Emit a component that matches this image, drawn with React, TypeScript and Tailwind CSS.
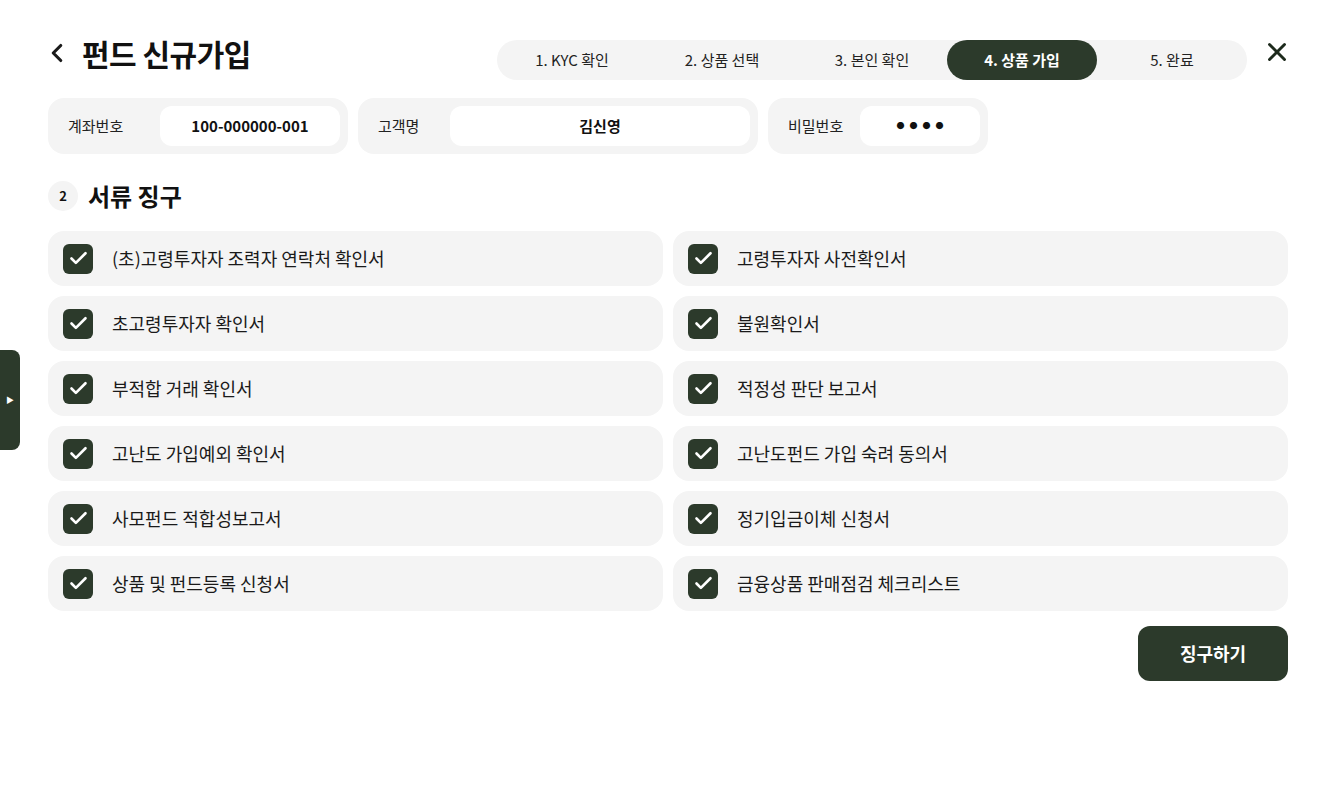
import { Check, ChevronLeft, X } from 'lucide-react'

const steps = ['1. KYC 확인', '2. 상품 선택', '3. 본인 확인', '4. 상품 가입', '5. 완료']

// 서류 목록 (좌/우 순서대로)
const docs = [
  '(초)고령투자자 조력자 연락처 확인서',
  '고령투자자 사전확인서',
  '초고령투자자 확인서',
  '불원확인서',
  '부적합 거래 확인서',
  '적정성 판단 보고서',
  '고난도 가입예외 확인서',
  '고난도펀드 가입 숙려 동의서',
  '사모펀드 적합성보고서',
  '정기입금이체 신청서',
  '상품 및 펀드등록 신청서',
  '금융상품 판매점검 체크리스트',
]

function InfoBox({ label, value, boxClass, valueClass }: { label: string; value: string; boxClass: string; valueClass?: string }) {
  return (
    <div className="flex h-[56px] items-center justify-between rounded-2xl bg-[#f4f4f4] pl-5 pr-2">
      <span className="mr-4 text-[15px] text-[#222]">{label}</span>
      <div className={`flex h-10 items-center justify-center rounded-xl bg-white ${boxClass}`}>
        <span className={valueClass ?? 'text-[15px] font-bold text-[#111]'}>{value}</span>
      </div>
    </div>
  )
}

export default function App() {
  return (
    <div
      className="relative min-h-[800px] w-[1318px] bg-white text-[#111]"
      style={{ fontFamily: '"Noto Sans CJK KR", "Noto Sans", sans-serif' }}
    >
      {/* 사이드 탭 */}
      <div className="absolute left-0 top-[350px] flex h-[100px] w-[20px] items-center justify-center rounded-r-lg bg-[#2c3a2b]">
        <span className="text-[8px] leading-none text-white">▶</span>
      </div>

      <div className="pl-[48px] pr-[30px] pt-[40px]">
        {/* 헤더 */}
        <div className="flex items-start justify-between">
          <div className="-mt-[2px] flex h-[30px] items-center">
            <ChevronLeft className="-ml-[6px] h-[30px] w-[30px] text-[#1b1b1b]" strokeWidth={2.5} />
            <h1 className="ml-[10px] text-[30px] font-bold leading-[30px] tracking-[-0.5px] text-[#111]">펀드 신규가입</h1>
          </div>
          <div className="flex items-center">
            <div className="flex h-10 w-[750px] items-center rounded-full bg-[#f4f4f4]">
              {steps.map((s, i) => (
                <div
                  key={s}
                  className={`flex h-10 w-[150px] items-center justify-center rounded-full text-[15px] ${
                    i === 3 ? 'bg-[#2c3a2b] font-bold text-white' : 'text-[#222]'
                  }`}
                >
                  {s}
                </div>
              ))}
            </div>
            <X className="-mt-[17px] ml-[15px] -mr-[4px] h-[30px] w-[30px] text-[#1d2a1c]" strokeWidth={2.3} />
          </div>
        </div>

        {/* 계좌 정보 */}
        <div className="mt-[18px] flex gap-[10px]">
          <div className="w-[300px]">
            <InfoBox label="계좌번호" value="100-000000-001" boxClass="w-[180px]" />
          </div>
          <div className="w-[400px]">
            <InfoBox label="고객명" value="김신영" boxClass="w-[300px]" />
          </div>
          <div className="w-[220px]">
            <InfoBox label="비밀번호" value="●●●●" boxClass="w-[120px]" valueClass="text-[8px] tracking-[5px] pl-[5px] text-[#111]" />
          </div>
        </div>

        {/* 서류 징구 */}
        <div className="mt-[24px] flex items-center">
          <div className="flex h-[30px] w-[30px] items-center justify-center rounded-full bg-[#f4f4f4] text-[13px] font-bold">2</div>
          <h2 className="ml-[10px] text-[24px] font-bold">서류 징구</h2>
        </div>

        <div className="mt-[17px] grid grid-cols-2 gap-x-[10px] gap-y-[10px]">
          {docs.map((d) => (
            <div key={d} className="flex h-[55px] items-center rounded-2xl bg-[#f4f4f4] px-[15px]">
              <div className="flex h-[30px] w-[30px] items-center justify-center rounded-md bg-[#2c3a2b]">
                <Check className="h-[21px] w-[21px] text-white" strokeWidth={3} />
              </div>
              <span className="ml-[19px] text-[18px] text-[#1a1a1a]">{d}</span>
            </div>
          ))}
        </div>

        <div className="mt-[15px] flex justify-end">
          <button className="h-[55px] w-[150px] rounded-xl bg-[#2c3a2b] text-[18px] font-bold text-white">징구하기</button>
        </div>
      </div>
    </div>
  )
}
